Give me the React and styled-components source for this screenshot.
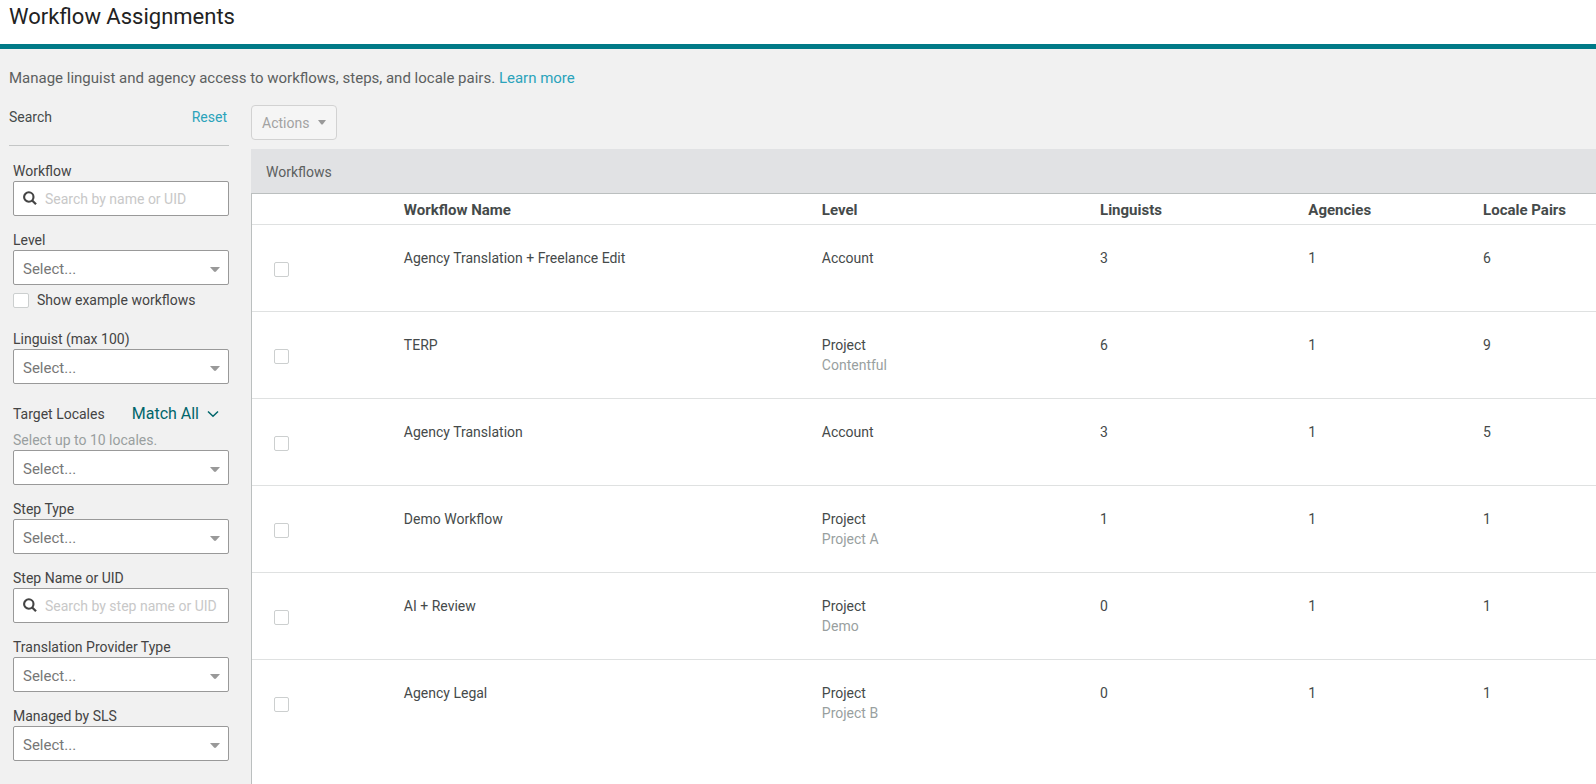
import React from 'react';
import styled, { createGlobalStyle } from 'styled-components';

const colors = {
  teal: '#007a87',
  darkTeal: '#00666b',
  link: '#2ba3bb',
  page: '#f1f1f1',
  bar: '#e1e2e4',
  white: '#ffffff',
  title: '#222222',
  text: '#454a4a',
  label: '#444444',
  muted: '#999f9f',
  border: '#999999',
  line: '#dfe1e1',
};

const GlobalStyle = createGlobalStyle`
  * {
    box-sizing: border-box;
  }

  body {
    margin: 0;
    background: ${colors.page};
    color: ${colors.text};
    font-family: Roboto, 'Liberation Sans', sans-serif;
    font-size: 14px;
    font-weight: 450;
    line-height: 20px;
  }

  input,
  select,
  button {
    font-family: inherit;
    font-weight: inherit;
  }
`;

const Page = styled.div`
  display: flex;
  flex-direction: column;
  min-height: 100vh;
`;

const Header = styled.header`
  height: 49px;
  padding: 0 9px;
  background: ${colors.white};
  border-bottom: 5px solid ${colors.teal};
`;

const Title = styled.h1`
  margin: 0;
  color: ${colors.title};
  font-size: 22px;
  font-weight: 400;
  line-height: 34px;
`;

const Description = styled.p`
  margin: 0;
  padding: 19px 9px 0;
  color: #5c6060;
  font-size: 15px;
`;

const Link = styled.a`
  color: ${colors.link};
  text-decoration: none;
`;

const Body = styled.div`
  display: flex;
  flex: 1;
  padding-top: 17px;
`;

const Sidebar = styled.aside`
  flex: 0 0 251px;
  padding: 2px 22px 0 9px;
`;

const SearchHead = styled.div`
  display: flex;
  justify-content: space-between;
  height: 39px;
  padding-right: 2px;
  border-bottom: 1px solid #c4c6c6;
`;

const SearchTitle = styled.h2`
  margin: 0;
  font-size: 14px;
  font-weight: inherit;
  line-height: 20px;
`;

const Filters = styled.form`
  display: flex;
  flex-direction: column;
  gap: 14px;
  padding: 15px 0 0 4px;
`;

const Field = styled.div`
  display: flex;
  flex-direction: column;
`;

const Label = styled.label`
  color: ${colors.label};
`;

const Hint = styled.span`
  color: ${colors.muted};
`;

const LabelRow = styled.div`
  display: flex;
  align-items: center;
  justify-content: space-between;
  height: 32px;
  padding-right: 10px;
`;

const MatchButton = styled.button`
  display: flex;
  align-items: center;
  gap: 8px;
  padding: 0;
  border: 0;
  background: none;
  color: ${colors.darkTeal};
  font-size: 16px;
  line-height: 20px;
`;

const Control = styled.div`
  position: relative;
  display: flex;
  height: 35px;
`;

const ControlIcon = styled.svg`
  position: absolute;
  top: ${(props) => (props.$side === 'left' ? '10px' : '17px')};
  ${(props) => props.$side}: ${(props) => (props.$side === 'left' ? '10px' : '9px')};
  pointer-events: none;
`;

const TextInput = styled.input`
  width: 100%;
  padding: 0 9px 0 31px;
  border: 1px solid ${colors.border};
  border-radius: 2px;
  background: ${colors.white};
  color: ${colors.text};
  font-size: 14px;

  &::placeholder {
    color: #c8c8c8;
    opacity: 1;
  }
`;

const SelectInput = styled.select`
  width: 100%;
  padding: 2px 30px 0 9px;
  appearance: none;
  border: 1px solid ${colors.border};
  border-radius: 2px;
  background: ${colors.white};
  color: #777777;
  font-size: 15px;
`;

const CheckRow = styled.label`
  display: flex;
  align-items: center;
  gap: 8px;
  height: 30px;
  color: ${colors.label};
`;

const Checkbox = styled.input`
  display: block;
  width: ${(props) => (props.$large ? '16px' : '15px')};
  height: 15px;
  margin: 0;
  appearance: none;
  border: 1px solid #cccfcf;
  border-radius: 2px;
  background: ${colors.white};

  &:checked {
    background: ${colors.teal};
  }
`;

const Main = styled.main`
  display: flex;
  flex: 1;
  flex-direction: column;
  min-width: 0;
`;

const ActionsButton = styled.button`
  display: flex;
  align-items: center;
  align-self: flex-start;
  gap: 9px;
  height: 35px;
  margin-bottom: 9px;
  padding: 0 10px;
  border: 1px solid #d2d2d2;
  border-radius: 4px;
  background: #f5f5f5;
  color: #a2a2a2;
  font-size: 14px;
`;

const PanelTitle = styled.h2`
  margin: 0;
  padding: 13px 15px 11px;
  background: ${colors.bar};
  color: #5c6060;
  font-size: 14px;
  font-weight: inherit;
  line-height: 20px;
`;

const Panel = styled.div`
  flex: 1;
  border-top: 1px solid #bbbfbf;
  border-left: 1px solid #bbbfbf;
  background: ${colors.white};
`;

const Table = styled.table`
  width: 100%;
  border-collapse: collapse;
  table-layout: fixed;
`;

const Th = styled.th`
  width: ${(props) => props.$width};
  height: 30px;
  padding: 2px 0 0;
  border-bottom: 1px solid ${colors.line};
  font-size: 15px;
  font-weight: 700;
  text-align: left;
`;

const Row = styled.tr`
  height: 87px;

  &:not(:last-child) td {
    border-bottom: 1px solid ${colors.line};
  }
`;

const Td = styled.td`
  padding: 23px 0 0;
  vertical-align: top;
`;

const CheckTd = styled.td`
  padding: 4px 0 0 22px;
`;

const SubText = styled.div`
  color: ${colors.muted};
`;

const workflows = [
  { name: 'Agency Translation + Freelance Edit', level: 'Account', linguists: 3, agencies: 1, pairs: 6 },
  { name: 'TERP', level: 'Project', project: 'Contentful', linguists: 6, agencies: 1, pairs: 9 },
  { name: 'Agency Translation', level: 'Account', linguists: 3, agencies: 1, pairs: 5 },
  { name: 'Demo Workflow', level: 'Project', project: 'Project A', linguists: 1, agencies: 1, pairs: 1 },
  { name: 'AI + Review', level: 'Project', project: 'Demo', linguists: 0, agencies: 1, pairs: 1 },
  { name: 'Agency Legal', level: 'Project', project: 'Project B', linguists: 0, agencies: 1, pairs: 1 },
];

const SearchField = ({ id, label, placeholder }) => (
  <Field>
    <Label htmlFor={id}>{label}</Label>
    <Control>
      <TextInput id={id} type="text" placeholder={placeholder} />
      <ControlIcon $side="left" width="15" height="15" viewBox="0 0 15 15" fill="none" stroke="#444">
        <circle cx="5.8" cy="6" r="4.7" strokeWidth="2.1" />
        <path d="M9.2 9.5L13 13.2" strokeWidth="2.3" />
      </ControlIcon>
    </Control>
  </Field>
);

const SelectControl = ({ id }) => (
  <Control>
    <SelectInput id={id}>
      <option>Select...</option>
    </SelectInput>
    <ControlIcon $side="right" width="10" height="5" viewBox="0 0 10 5" fill="#999">
      <path d="M0 0H10L6 4.6Q5 5.4 4 4.6Z" />
    </ControlIcon>
  </Control>
);

const SelectField = ({ id, label, children }) => (
  <Field>
    <Label htmlFor={id}>{label}</Label>
    <SelectControl id={id} />
    {children}
  </Field>
);

const App = () => {
  return (
    <Page>
      <GlobalStyle />
      <Header>
        <Title>Workflow Assignments</Title>
      </Header>
      <Description>
        Manage linguist and agency access to workflows, steps, and locale pairs.{' '}
        <Link href="#learn">Learn more</Link>
      </Description>
      <Body>
        <Sidebar>
          <SearchHead>
            <SearchTitle>Search</SearchTitle>
            <Link href="#reset">Reset</Link>
          </SearchHead>
          <Filters>
            <SearchField id="workflow" label="Workflow" placeholder="Search by name or UID" />
            <SelectField id="level" label="Level">
              <CheckRow>
                <Checkbox type="checkbox" $large />
                Show example workflows
              </CheckRow>
            </SelectField>
            <SelectField id="linguist" label="Linguist (max 100)" />
            <Field>
              <LabelRow>
                <Label htmlFor="locales">Target Locales</Label>
                <MatchButton type="button">
                  Match All
                  <svg width="12" height="8" viewBox="0 0 12 8" fill="none" stroke="currentColor" strokeWidth="1.5">
                    <path d="M1 1.5L6 6.3L11 1.5" />
                  </svg>
                </MatchButton>
              </LabelRow>
              <Hint>Select up to 10 locales.</Hint>
              <SelectControl id="locales" />
            </Field>
            <SelectField id="stepType" label="Step Type" />
            <SearchField id="stepName" label="Step Name or UID" placeholder="Search by step name or UID" />
            <SelectField id="provider" label="Translation Provider Type" />
            <SelectField id="managed" label="Managed by SLS" />
          </Filters>
        </Sidebar>
        <Main>
          <ActionsButton type="button" disabled>
            Actions
            <svg width="8" height="5" viewBox="0 0 8 5" fill="#999">
              <path d="M0 0H8L5 3.9Q4 4.9 3 3.9Z" />
            </svg>
          </ActionsButton>
          <PanelTitle>Workflows</PanelTitle>
          <Panel>
            <Table>
              <thead>
                <tr>
                  <Th $width="11.3%" />
                  <Th $width="31.1%">Workflow Name</Th>
                  <Th $width="20.7%">Level</Th>
                  <Th $width="15.5%">Linguists</Th>
                  <Th $width="13%">Agencies</Th>
                  <Th>Locale Pairs</Th>
                </tr>
              </thead>
              <tbody>
                {workflows.map((item) => (
                  <Row key={item.name}>
                    <CheckTd>
                      <Checkbox type="checkbox" aria-label={item.name} />
                    </CheckTd>
                    <Td>{item.name}</Td>
                    <Td>
                      {item.level}
                      {item.project && <SubText>{item.project}</SubText>}
                    </Td>
                    <Td>{item.linguists}</Td>
                    <Td>{item.agencies}</Td>
                    <Td>{item.pairs}</Td>
                  </Row>
                ))}
              </tbody>
            </Table>
          </Panel>
        </Main>
      </Body>
    </Page>
  );
};

export default App;
